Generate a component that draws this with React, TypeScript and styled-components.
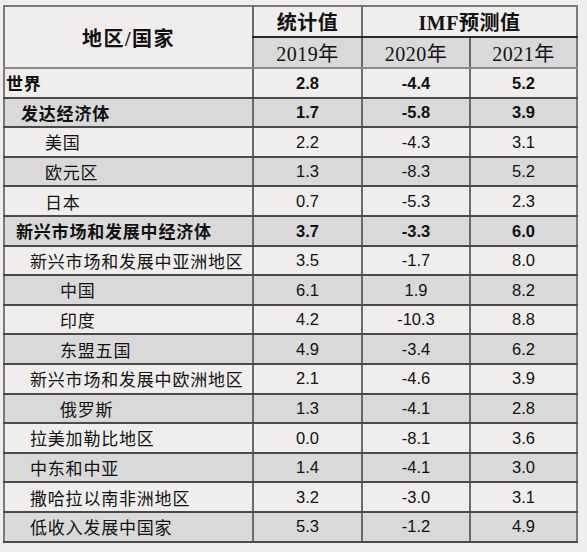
import styled, { createGlobalStyle } from 'styled-components';

const GlobalStyle = createGlobalStyle`
  html, body {
    margin: 0;
    padding: 0;
    background: #efeeec;
  }
`;

type Row = {
  label: string;
  indent: number;
  bold?: boolean;
  values: [string, string, string];
};

const rows: Row[] = [
  { label: '世界', indent: 1, bold: true, values: ['2.8', '-4.4', '5.2'] },
  { label: '发达经济体', indent: 16, bold: true, values: ['1.7', '-5.8', '3.9'] },
  { label: '美国', indent: 40, values: ['2.2', '-4.3', '3.1'] },
  { label: '欧元区', indent: 40, values: ['1.3', '-8.3', '5.2'] },
  { label: '日本', indent: 40, values: ['0.7', '-5.3', '2.3'] },
  { label: '新兴市场和发展中经济体', indent: 11, bold: true, values: ['3.7', '-3.3', '6.0'] },
  { label: '新兴市场和发展中亚洲地区', indent: 25, values: ['3.5', '-1.7', '8.0'] },
  { label: '中国', indent: 55, values: ['6.1', '1.9', '8.2'] },
  { label: '印度', indent: 55, values: ['4.2', '-10.3', '8.8'] },
  { label: '东盟五国', indent: 55, values: ['4.9', '-3.4', '6.2'] },
  { label: '新兴市场和发展中欧洲地区', indent: 25, values: ['2.1', '-4.6', '3.9'] },
  { label: '俄罗斯', indent: 55, values: ['1.3', '-4.1', '2.8'] },
  { label: '拉美加勒比地区', indent: 25, values: ['0.0', '-8.1', '3.6'] },
  { label: '中东和中亚', indent: 25, values: ['1.4', '-4.1', '3.0'] },
  { label: '撒哈拉以南非洲地区', indent: 25, values: ['3.2', '-3.0', '3.1'] },
  { label: '低收入发展中国家', indent: 25, values: ['5.3', '-1.2', '4.9'] },
];

const Page = styled.div`
  padding: 5px 0 0 3px;
`;

const Table = styled.table`
  border-collapse: collapse;
  table-layout: fixed;
  width: 573px;
  border: 2px solid #7a7a7a;
  color: #111;
`;

const Col = styled.col<{ $w: number }>`
  width: ${(p) => p.$w}px;
`;

const HeadCell = styled.th<{ $shaded?: boolean; $first?: boolean }>`
  height: ${(p) => (p.$first ? 58 : 29)}px;
  padding: 0;
  text-align: center;
  background: ${(p) => (p.$shaded ? '#d9d9d9' : '#efeeec')};
  border-left: 2px solid #6b6b6b;
  border-bottom: 2px solid #2a2a2a;
  font-family: 'Liberation Serif', 'Noto Sans CJK SC', serif;
  font-size: 20px;
  font-weight: ${(p) => (p.$shaded ? 400 : 700)};
  letter-spacing: 0.5px;
`;

const LabelHead = styled(HeadCell)`
  border-left: none;
  border-right: 1px solid #111;
  border-bottom: 2px solid #8a8a8a;
  font-size: 20px;
  letter-spacing: 1.5px;
`;

const Year = styled(HeadCell)`
  border-bottom: 2px solid #8a8a8a;
`;

const DataRow = styled.tr<{ $shaded: boolean }>`
  height: 29.6px;
  background: ${(p) => (p.$shaded ? '#d9d9d9' : '#efeeec')};
`;

const Label = styled.td<{ $indent: number; $bold?: boolean }>`
  padding: 0 0 0 ${(p) => p.$indent}px;
  border-right: 1px solid #111;
  border-bottom: 2px solid #4a4a4a;
  font-family: 'Noto Sans CJK SC', 'Liberation Sans', sans-serif;
  font-size: 17px;
  font-weight: ${(p) => (p.$bold ? 700 : 400)};
  letter-spacing: 0.8px;
  white-space: nowrap;
  line-height: 1;
`;

const Value = styled.td<{ $bold?: boolean }>`
  padding: 0;
  text-align: center;
  border-left: 2px solid #6b6b6b;
  border-bottom: 2px solid #4a4a4a;
  font-family: 'Liberation Sans', Arial, sans-serif;
  font-size: 16.5px;
  font-weight: ${(p) => (p.$bold ? 700 : 400)};
  line-height: 1;
`;

export default function App() {
  return (
    <Page>
      <GlobalStyle />
      <Table>
        <colgroup>
          <Col $w={249} />
          <Col $w={109} />
          <Col $w={108} />
          <Col $w={107} />
        </colgroup>
        <thead>
          <tr>
            <LabelHead rowSpan={2} $first>
              地区/国家
            </LabelHead>
            <HeadCell>统计值</HeadCell>
            <HeadCell colSpan={2}>IMF预测值</HeadCell>
          </tr>
          <tr>
            <Year $shaded>2019年</Year>
            <Year $shaded>2020年</Year>
            <Year $shaded>2021年</Year>
          </tr>
        </thead>
        <tbody>
          {rows.map((r, i) => (
            <DataRow key={r.label} $shaded={i % 2 === 1}>
              <Label $indent={r.indent} $bold={r.bold}>
                {r.label}
              </Label>
              {r.values.map((v, j) => (
                <Value key={j} $bold={r.bold}>
                  {v}
                </Value>
              ))}
            </DataRow>
          ))}
        </tbody>
      </Table>
    </Page>
  );
}
